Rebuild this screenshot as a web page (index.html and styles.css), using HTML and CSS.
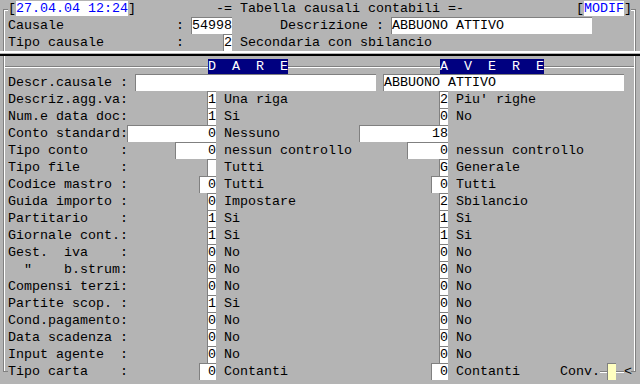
FILE: index.html
```html
<!DOCTYPE html>
<html lang="it">
<head>
  <meta charset="UTF-8">
  <title>Tabella causali contabili</title>
  <link rel="stylesheet" href="styles.css">
</head>
<body>
<div class="screen">
  <div class="head">
    <div class="line"> [<span class="clock">27.04.04 12:24</span>]          -= Tabella causali contabili =-              [<span class="clock">MODIF</span>]</div>
    <div class="line"> Causale              : <span class="fld">54998</span>      Descrizione : <span class="fld w25 left">ABBUONO ATTIVO</span></div>
    <div class="line"> Tipo causale         :     <span class="fld">2</span> Secondaria con sbilancio</div>
  </div>
  <div class="sep"></div>
  <div class="body">
    <div class="band-row"><span class="band">D  A  R  E</span><span class="band">A  V  E  R  E</span></div>
    <div class="row wide"><span>Descr.causale :</span><span class="fld w30"></span><span class="fld w30 left">ABBUONO ATTIVO</span></div>
    <div class="row"><span>Descriz.agg.va:</span><span class="fld">1</span><span class="desc">Una riga</span><span class="fld">2</span><span class="desc">Piu' righe</span></div>
    <div class="row"><span>Num.e data doc:</span><span class="fld">1</span><span class="desc">Si</span><span class="fld">0</span><span class="desc">No</span></div>
    <div class="row"><span>Conto standard:</span><span class="fld w11">0</span><span class="desc">Nessuno</span><span class="fld w11">18</span><span class="desc"></span></div>
    <div class="row"><span>Tipo conto    :</span><span class="fld w5">0</span><span class="desc">nessun controllo</span><span class="fld w5">0</span><span class="desc">nessun controllo</span></div>
    <div class="row"><span>Tipo file     :</span><span class="fld"></span><span class="desc">Tutti</span><span class="fld">G</span><span class="desc">Generale</span></div>
    <div class="row"><span>Codice mastro :</span><span class="fld w2">0</span><span class="desc">Tutti</span><span class="fld w2">0</span><span class="desc">Tutti</span></div>
    <div class="row"><span>Guida importo :</span><span class="fld">0</span><span class="desc">Impostare</span><span class="fld">2</span><span class="desc">Sbilancio</span></div>
    <div class="row"><span>Partitario    :</span><span class="fld">1</span><span class="desc">Si</span><span class="fld">1</span><span class="desc">Si</span></div>
    <div class="row"><span>Giornale cont.:</span><span class="fld">1</span><span class="desc">Si</span><span class="fld">1</span><span class="desc">Si</span></div>
    <div class="row"><span>Gest.  iva    :</span><span class="fld">0</span><span class="desc">No</span><span class="fld">0</span><span class="desc">No</span></div>
    <div class="row"><span>  "    b.strum:</span><span class="fld">0</span><span class="desc">No</span><span class="fld">0</span><span class="desc">No</span></div>
    <div class="row"><span>Compensi terzi:</span><span class="fld">0</span><span class="desc">No</span><span class="fld">0</span><span class="desc">No</span></div>
    <div class="row"><span>Partite scop. :</span><span class="fld">1</span><span class="desc">Si</span><span class="fld">0</span><span class="desc">No</span></div>
    <div class="row"><span>Cond.pagamento:</span><span class="fld">0</span><span class="desc">No</span><span class="fld">0</span><span class="desc">No</span></div>
    <div class="row"><span>Data scadenza :</span><span class="fld">0</span><span class="desc">No</span><span class="fld">0</span><span class="desc">No</span></div>
    <div class="row"><span>Input agente  :</span><span class="fld">0</span><span class="desc">No</span><span class="fld">0</span><span class="desc">No</span></div>
    <div class="row"><span>Tipo carta    :</span><span class="fld w2">0</span><span class="desc">Contanti</span><span class="fld w2">0</span><span class="desc last"><span>Contanti</span><span class="conv">Conv.<span class="dash"></span><span class="fld yellow"></span><span class="dash"></span>&lt;</span></span></div>
  </div>
</div>
</body>
</html>
```

FILE: styles.css
```css
body {
  margin: 0;
  background: #b4b4b4;
  font-family: "Liberation Mono", "Courier New", monospace;
  font-size: 13.333px;
  line-height: 17px;
  color: #000;
}
.screen { width: 640px; height: 384px; overflow: hidden; }

/* parte alta */
.head { position: relative; height: 51px; }
.line { white-space: pre; height: 17px; }
.head::before, .head::after {
  content: "";
  position: absolute;
  top: 9px;
  bottom: 0;
  width: 4px;
  border-top: 1px solid #808080;
}
.head::before { left: 3px; border-left: 1px solid #808080; box-shadow: inset 1px 1px 0 #fff; }
.head::after { right: 4px; border-right: 1px solid #808080; box-shadow: inset -1px 1px 0 #fff; }
.clock { background: #fff; color: #0000ff; }

.sep {
  height: 1px;
  border-top: 2px solid #fff;
  border-bottom: 2px solid #000;
}

/* parte bassa */
.body { position: relative; height: 328px; padding-top: 1px; box-sizing: border-box; }
.body::before, .body::after {
  content: "";
  position: absolute;
  top: 0;
  height: 316px;
  width: 5px;
  box-sizing: border-box;
  border-bottom: 1px solid #808080;
}
.body::before { left: 3px; border-left: 1px solid #808080; box-shadow: inset 1px 0 0 #fff; }
.body::after { right: 4px; border-right: 1px solid #808080; box-shadow: inset -1px 0 0 #fff; }

.band-row {
  display: flex;
  gap: 152px;
  height: 17px;
  padding-left: 208px;
  background:
    linear-gradient(#808080, #808080) 4px 9px / 630px 1px no-repeat,
    linear-gradient(#fff, #fff) 4px 10px / 630px 1px no-repeat;
}
.band {
  white-space: pre;
  background: #000080;
  color: #fff;
  margin-top: 2px;
  height: 15px;
  line-height: 15px;
}

.row {
  display: grid;
  grid-template-columns: 120px 88px 144px 88px 1fr;
  height: 17px;
  padding-left: 8px;
}
.row > span { white-space: pre; }
.row.wide { display: flex; gap: 8px; }
.row.wide > span:first-child { width: 120px; }
.desc { padding-left: 8px; }
.desc.last { display: flex; justify-content: space-between; padding-right: 8px; }
.conv { display: flex; }

.fld {
  display: inline-block;
  vertical-align: top;
  height: 17px;
  min-width: 8px;
  background: #fff;
  box-shadow: -1px 0 0 #808080, inset 0 1px 0 #808080;
  text-align: right;
  justify-self: end;
}
.fld.left { text-align: left; }
.w2 { width: 16px; }
.w5 { width: 40px; }
.w11 { width: 88px; }
.w25 { width: 200px; }
.w30 { width: 240px; }
.yellow { width: 8px; background: #ffffc0; }
.dash {
  width: 8px;
  height: 17px;
  background:
    linear-gradient(#808080, #808080) 0 8px / 8px 1px no-repeat,
    linear-gradient(#fff, #fff) 0 9px / 8px 1px no-repeat;
}
```
